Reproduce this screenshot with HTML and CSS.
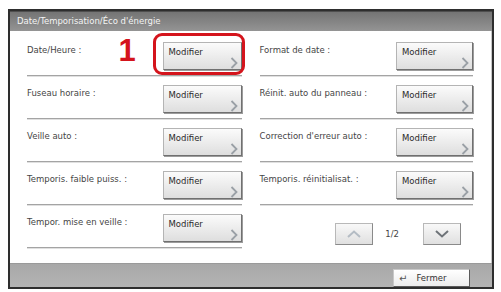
FILE: index.html
```html
<!DOCTYPE html>
<html lang="fr">
<head>
  <meta charset="UTF-8">
  <meta name="viewport" content="width=device-width, initial-scale=1.0">
  <title>Date/Temporisation/Éco d'énergie</title>
  <link rel="stylesheet" href="styles.css">
</head>
<body>
  <div class="window">
    <div class="titlebar">Date/Temporisation/Éco d'énergie</div>

    <div class="content">
      <div class="column">
        <div class="row">
          <span class="label">Date/Heure :</span>
          <div class="btn-wrap">
            <span class="step">1</span>
            <span class="highlight"></span>
            <button class="btn" type="button">Modifier<span class="chev"><svg width="8" height="12" viewBox="0 0 8 12"><path d="M1.5 1 L6.5 6 L1.5 11" fill="none" stroke="#9aa0a6" stroke-width="1.8"/></svg></span></button>
          </div>
        </div>
        <div class="row">
          <span class="label">Fuseau horaire :</span>
          <button class="btn" type="button">Modifier<span class="chev"><svg width="8" height="12" viewBox="0 0 8 12"><path d="M1.5 1 L6.5 6 L1.5 11" fill="none" stroke="#9aa0a6" stroke-width="1.8"/></svg></span></button>
        </div>
        <div class="row">
          <span class="label">Veille auto :</span>
          <button class="btn" type="button">Modifier<span class="chev"><svg width="8" height="12" viewBox="0 0 8 12"><path d="M1.5 1 L6.5 6 L1.5 11" fill="none" stroke="#9aa0a6" stroke-width="1.8"/></svg></span></button>
        </div>
        <div class="row">
          <span class="label">Temporis. faible puiss. :</span>
          <button class="btn" type="button">Modifier<span class="chev"><svg width="8" height="12" viewBox="0 0 8 12"><path d="M1.5 1 L6.5 6 L1.5 11" fill="none" stroke="#9aa0a6" stroke-width="1.8"/></svg></span></button>
        </div>
        <div class="row">
          <span class="label">Tempor. mise en veille :</span>
          <button class="btn" type="button">Modifier<span class="chev"><svg width="8" height="12" viewBox="0 0 8 12"><path d="M1.5 1 L6.5 6 L1.5 11" fill="none" stroke="#9aa0a6" stroke-width="1.8"/></svg></span></button>
        </div>
      </div>

      <div class="column right">
        <div class="row">
          <span class="label">Format de date :</span>
          <button class="btn" type="button">Modifier<span class="chev"><svg width="8" height="12" viewBox="0 0 8 12"><path d="M1.5 1 L6.5 6 L1.5 11" fill="none" stroke="#9aa0a6" stroke-width="1.8"/></svg></span></button>
        </div>
        <div class="row">
          <span class="label">Réinit. auto du panneau :</span>
          <button class="btn" type="button">Modifier<span class="chev"><svg width="8" height="12" viewBox="0 0 8 12"><path d="M1.5 1 L6.5 6 L1.5 11" fill="none" stroke="#9aa0a6" stroke-width="1.8"/></svg></span></button>
        </div>
        <div class="row">
          <span class="label">Correction d'erreur auto :</span>
          <button class="btn" type="button">Modifier<span class="chev"><svg width="8" height="12" viewBox="0 0 8 12"><path d="M1.5 1 L6.5 6 L1.5 11" fill="none" stroke="#9aa0a6" stroke-width="1.8"/></svg></span></button>
        </div>
        <div class="row">
          <span class="label">Temporis. réinitialisat. :</span>
          <button class="btn" type="button">Modifier<span class="chev"><svg width="8" height="12" viewBox="0 0 8 12"><path d="M1.5 1 L6.5 6 L1.5 11" fill="none" stroke="#9aa0a6" stroke-width="1.8"/></svg></span></button>
        </div>
        <div class="pager">
          <button class="page-btn" type="button"><svg width="14" height="8" viewBox="0 0 14 8"><path d="M1 7 L7 1.5 L13 7" fill="none" stroke="#b4bcc4" stroke-width="2"/></svg></button>
          <span class="page-num">1/2</span>
          <button class="page-btn" type="button"><svg width="14" height="8" viewBox="0 0 14 8"><path d="M1 1 L7 6.5 L13 1" fill="none" stroke="#6e7378" stroke-width="2"/></svg></button>
        </div>
      </div>
    </div>

    <div class="footer">
      <button class="close" type="button"><span class="enter">&#8629;</span>Fermer</button>
    </div>
  </div>
</body>
</html>
```

FILE: styles.css
```css
body {
  margin: 0;
  background: #fff;
  font-family: "DejaVu Sans", Tahoma, sans-serif;
}

.window {
  margin: 9px 0 0 8px;
  width: 482px;
  height: 276px;
  border: 2px solid #2e2e2e;
  display: flex;
  flex-direction: column;
  background: #fff;
}

.titlebar {
  height: 19px;
  line-height: 18px;
  padding-left: 7px;
  background: linear-gradient(#747474, #949494);
  border-top: 1px solid #4e4e4e;
  color: #f4f4f4;
  font-size: 8.5px;
}

.content {
  flex: 1;
  display: flex;
  gap: 18px;
  padding: 2px 18px 0 17px;
  border-right: 1px solid #c8c8c8;
}

.column {
  width: 215px;
  display: flex;
  flex-direction: column;
}

.column.right {
  width: 214px;
}

.row {
  display: flex;
  justify-content: space-between;
  align-items: flex-start;
  padding-top: 9px;
  box-sizing: border-box;
  height: 43px;
  border-bottom: 1px solid #a4a4a4;
  box-shadow: 0 1px 0 #e0e0e0;
}

.label {
  padding-top: 3px;
  font-size: 8.5px;
  color: #454545;
}

.btn-wrap {
  position: relative;
}

.btn {
  width: 79px;
  height: 28px;
  padding: 4px 3px 1px 5px;
  display: flex;
  flex-direction: column;
  justify-content: space-between;
  align-items: flex-start;
  background: linear-gradient(#fbfbfb, #dedede);
  border: 1px solid #b4b4b4;
  border-right-color: #707070;
  border-bottom-color: #707070;
  box-shadow: 1px 1px 0 #9c9c9c;
  font-family: "DejaVu Sans", Tahoma, sans-serif;
  font-size: 8.5px;
  color: #2a2a2a;
  box-sizing: border-box;
}

.column.right .btn {
  width: 77px;
}

.chev {
  align-self: flex-end;
  line-height: 0;
}

.highlight {
  position: absolute;
  left: -10px;
  right: -3px;
  top: -9px;
  bottom: -5px;
  border: 3px solid #d4141c;
  border-radius: 9px;
}

.step {
  position: absolute;
  left: -44px;
  top: -9px;
  font-family: "Liberation Sans", Arial, sans-serif;
  font-weight: bold;
  font-size: 31px;
  color: #d4141c;
}

.pager {
  display: flex;
  justify-content: flex-end;
  align-items: center;
  padding: 18px 12px 0 0;
}

.page-btn {
  width: 38px;
  height: 22px;
  display: flex;
  align-items: center;
  justify-content: center;
  background: linear-gradient(#f8f8f8, #e0e0e0);
  border: 1px solid #b8b8b8;
  border-right-color: #8a8a8a;
  border-bottom-color: #8a8a8a;
  padding: 0;
}

.page-num {
  margin: 0 24px 0 12px;
  font-size: 8.5px;
  color: #444;
}

.footer {
  height: 24px;
  display: flex;
  justify-content: flex-end;
  align-items: flex-start;
  padding: 5px 22px 0 0;
  box-sizing: border-box;
  background: linear-gradient(#a8a8a8, #b4b4b4);
  border-top: 1px solid #9a9a9a;
}

.close {
  width: 77px;
  height: 18px;
  display: flex;
  align-items: center;
  padding: 0 0 0 5px;
  background: linear-gradient(#ffffff, #ececec);
  border: 1px solid #c8c8c8;
  border-right-color: #5a5a5a;
  border-bottom-color: #5a5a5a;
  font-family: "DejaVu Sans", Tahoma, sans-serif;
  font-size: 8.5px;
  color: #333;
}

.enter {
  margin-right: 9px;
  font-size: 10px;
  color: #555;
}
```
